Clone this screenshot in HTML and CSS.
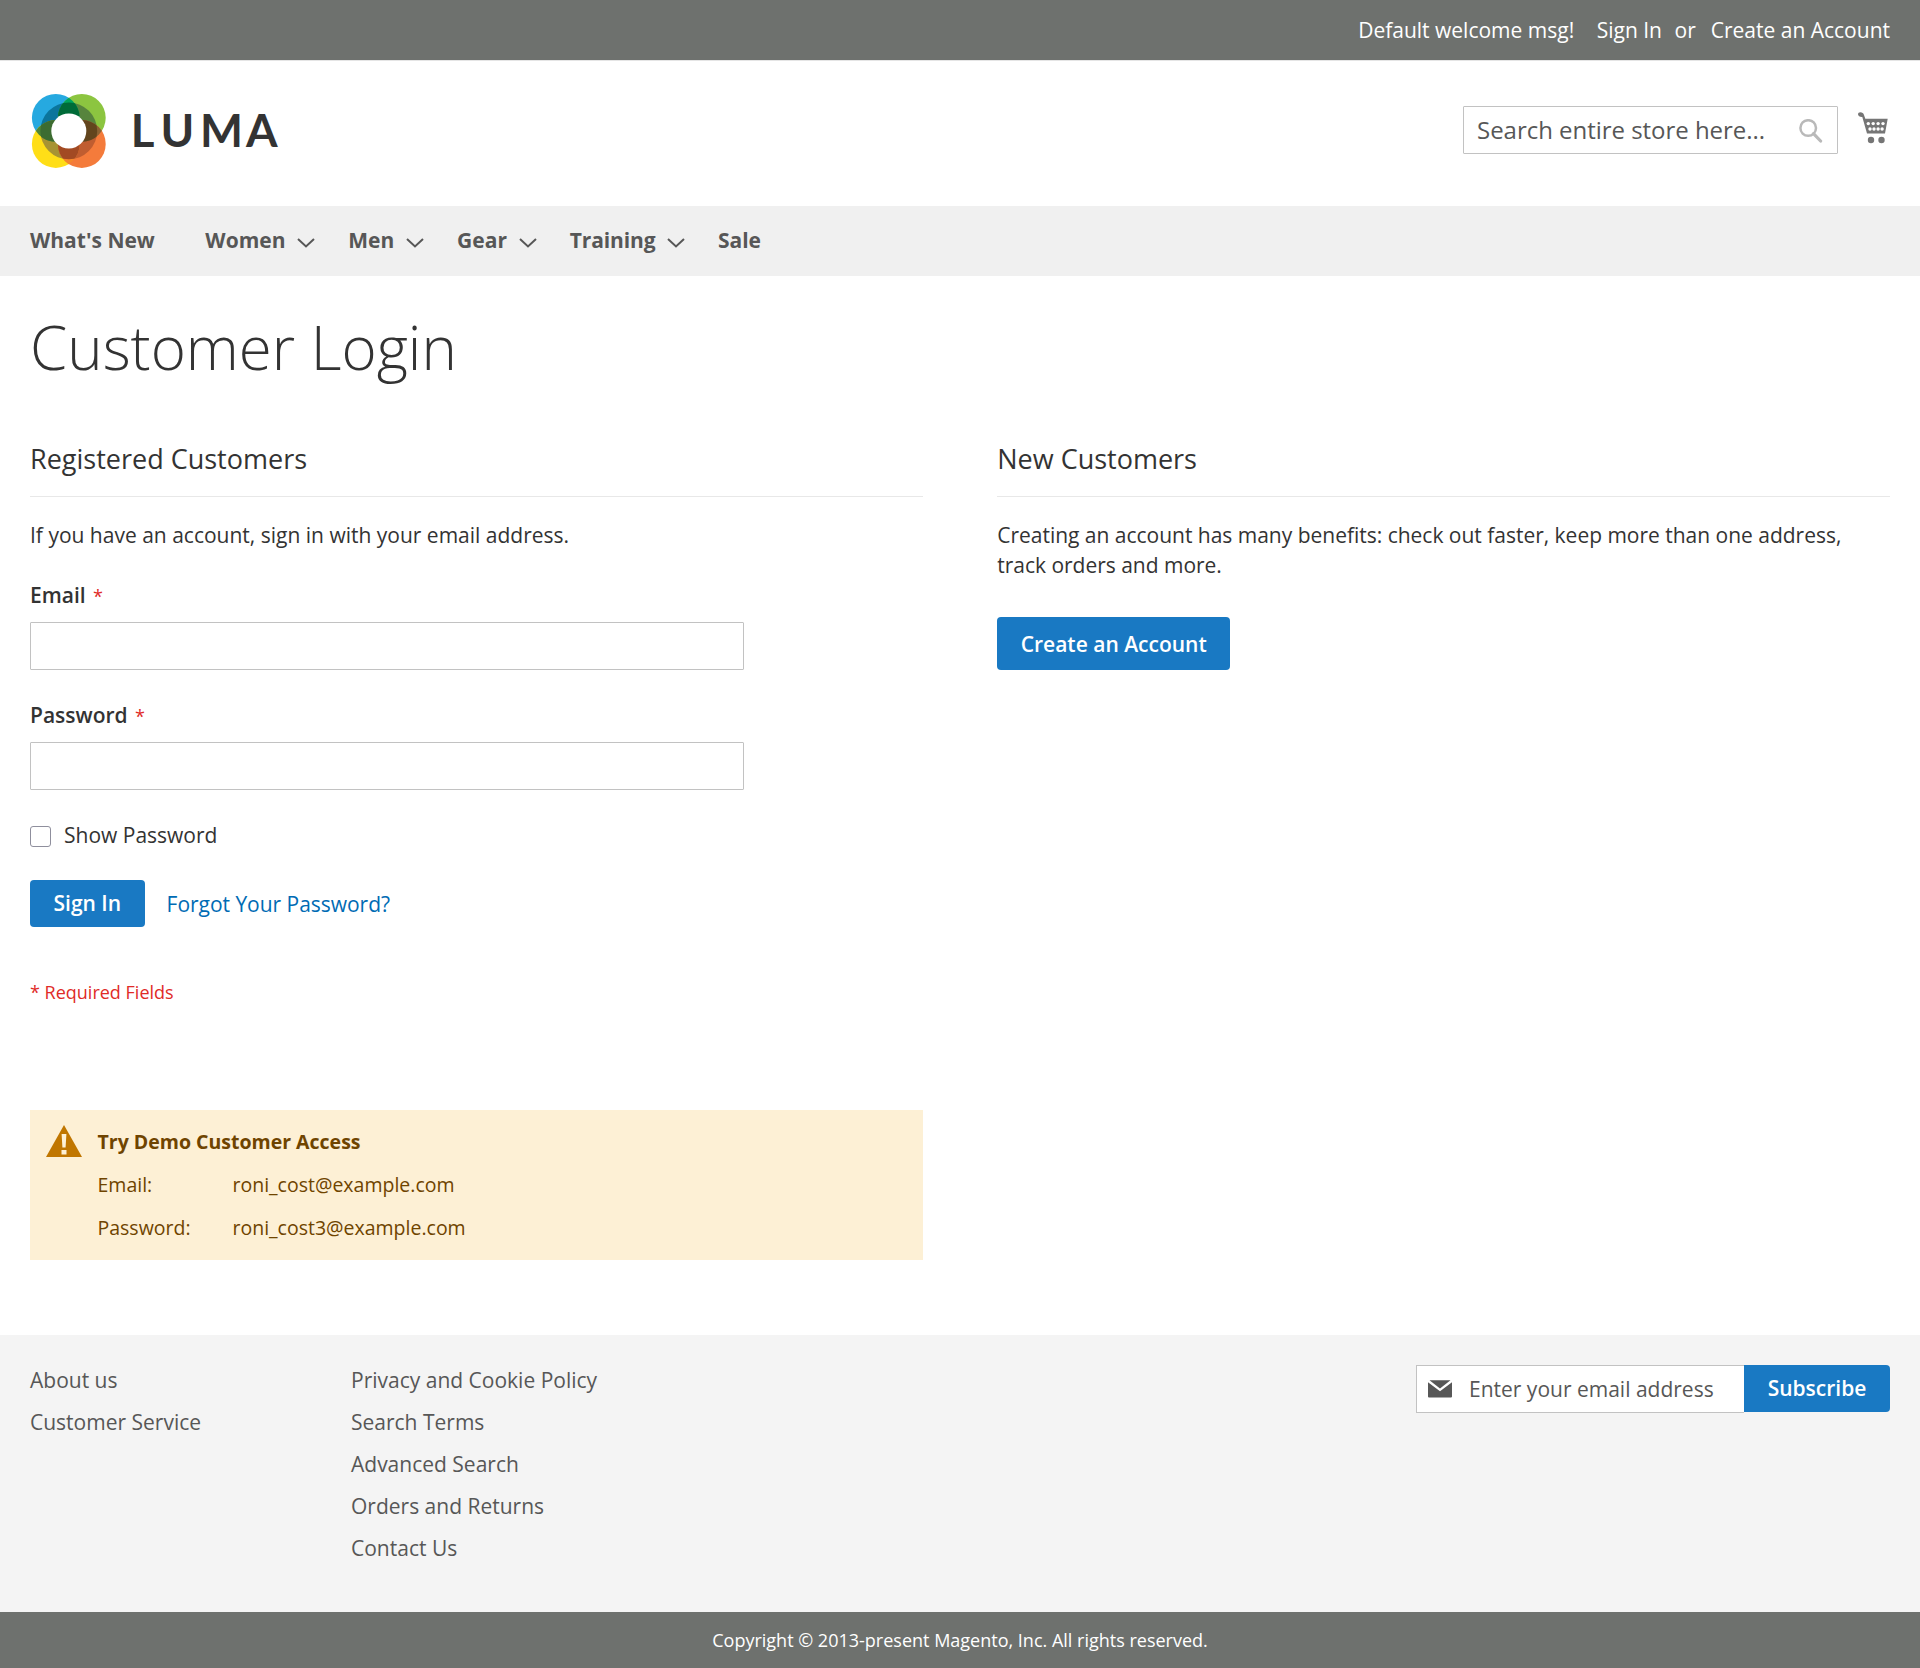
FILE: index.html
```html
<!DOCTYPE html>
<html lang="en">
<head>
<meta charset="utf-8">
<title>Customer Login</title>
<link rel="stylesheet" href="styles.css">
</head>
<body>
<header>
  <div class="topbar">
    <span class="welcome">Default welcome msg!</span>
    <a class="signin" href="#">Sign In</a>
    <span class="or">or</span>
    <a href="#">Create an Account</a>
  </div>
  <div class="header">
    <svg class="logo" width="250" height="78" viewBox="30 92 250 78" role="img" aria-label="Luma">
      <defs>
        <clipPath id="blue"><circle cx="55.8" cy="117.8" r="23.9"/></clipPath>
        <clipPath id="green"><circle cx="81.8" cy="117.8" r="23.9"/></clipPath>
        <clipPath id="yellow"><circle cx="55.8" cy="144" r="23.9"/></clipPath>
        <clipPath id="orange"><circle cx="81.8" cy="144" r="23.9"/></clipPath>
      </defs>
      <circle cx="55.8" cy="117.8" r="23.9" fill="#26a9e0"/>
      <circle cx="81.8" cy="117.8" r="23.9" fill="#8cc540"/>
      <circle cx="55.8" cy="144" r="23.9" fill="#ffde17"/>
      <circle cx="81.8" cy="144" r="23.9" fill="#f47b3b"/>
      <g clip-path="url(#blue)"><circle cx="68.8" cy="130.9" r="28.4" fill="#0b759c"/></g>
      <g clip-path="url(#green)"><circle cx="68.8" cy="130.9" r="28.4" fill="#57843d"/></g>
      <g clip-path="url(#yellow)"><circle cx="68.8" cy="130.9" r="28.4" fill="#a79333"/></g>
      <g clip-path="url(#orange)"><circle cx="68.8" cy="130.9" r="28.4" fill="#c05d30"/></g>
      <g clip-path="url(#blue)">
        <circle cx="81.8" cy="117.8" r="23.9" fill="#00a45c"/>
        <circle cx="55.8" cy="144" r="23.9" fill="#4e8536"/>
        <g clip-path="url(#green)"><circle cx="68.8" cy="130.9" r="28.4" fill="#006b38"/></g>
        <g clip-path="url(#yellow)"><circle cx="68.8" cy="130.9" r="28.4" fill="#3c6c31"/></g>
      </g>
      <g clip-path="url(#orange)">
        <circle cx="81.8" cy="117.8" r="23.9" fill="#8b6334"/>
        <circle cx="55.8" cy="144" r="23.9" fill="#f4872b"/>
        <g clip-path="url(#green)"><circle cx="68.8" cy="130.9" r="28.4" fill="#62451d"/></g>
        <g clip-path="url(#yellow)"><circle cx="68.8" cy="130.9" r="28.4" fill="#a24a23"/></g>
      </g>
      <circle cx="68.8" cy="131" r="17.5" fill="#fff"/>
      <text class="wordmark" x="130.8 160.5 200 246" y="146.6">LUMA</text>
    </svg>
    <div class="header-tools">
      <label class="search">
        <input type="text" placeholder="Search entire store here...">
        <svg width="24" height="24" viewBox="0 0 24 24"><circle cx="9.2" cy="9" r="7.8" fill="none" stroke="#b9b9b9" stroke-width="2.5"/><path d="M14.5 14.7L21.6 22" stroke="#b9b9b9" stroke-width="3.2" stroke-linecap="round"/></svg>
      </label>
      <svg class="cart" width="30" height="32" viewBox="0 0 30 32" fill="#757575">
        <path d="M2.300.3C4.200.3 5.600 1.400 6 3L7.300 6.800H29.700L27 21.500H9L4.300 5C2 5.200 0 3.900 0 2.300 0 1.100 1 .3 2.300.3Z"/>
        <circle cx="13" cy="28" r="3.200"/><circle cx="23.500" cy="28" r="3.200"/>
        <g fill="#fff"><circle cx="10.300" cy="11.600" r="1.700"/><circle cx="15.200" cy="11.600" r="1.700"/><circle cx="20.100" cy="11.600" r="1.700"/><circle cx="25" cy="11.600" r="1.700"/><circle cx="12" cy="17" r="1.700"/><circle cx="16" cy="17" r="1.700"/><circle cx="20.100" cy="17" r="1.700"/><circle cx="24.100" cy="17" r="1.700"/></g>
      </svg>
    </div>
  </div>
  <nav>
    <a class="plain" href="#">What's New</a>
    <a href="#">Women<svg width="18" height="10" viewBox="0 0 18 10"><path d="M1 1L9 8.500 17 1"/></svg></a>
    <a href="#">Men<svg width="18" height="10" viewBox="0 0 18 10"><path d="M1 1L9 8.500 17 1"/></svg></a>
    <a href="#">Gear<svg width="18" height="10" viewBox="0 0 18 10"><path d="M1 1L9 8.500 17 1"/></svg></a>
    <a class="training" href="#">Training<svg width="18" height="10" viewBox="0 0 18 10"><path d="M1 1L9 8.500 17 1"/></svg></a>
    <a href="#">Sale</a>
  </nav>
</header>
<main>
  <h1>Customer Login</h1>
  <div class="columns">
    <section>
      <h2>Registered Customers</h2>
      <p>If you have an account, sign in with your email address.</p>
      <form>
        <label class="field"><span>Email <i>*</i></span><input type="text"></label>
        <label class="field"><span>Password <i>*</i></span><input type="password"></label>
        <label class="show"><input type="checkbox">Show Password</label>
        <div class="actions"><button type="button">Sign In</button><a href="#">Forgot Your Password?</a></div>
        <div class="required">* Required Fields</div>
      </form>
      <div class="message">
        <svg width="36" height="32" viewBox="0 0 36 32"><path d="M18 0L36 32H0Z" fill="#c07600"/><path d="M15.600 9H20.400L19.600 22.500H16.400ZM15.500 25H20.500V29.500H15.500Z" fill="#fdf0d5"/></svg>
        <dl>
          <dt class="wide">Try Demo Customer Access</dt>
          <dt>Email:</dt><dd>roni_cost@example.com</dd>
          <dt>Password:</dt><dd>roni_cost3@example.com</dd>
        </dl>
      </div>
    </section>
    <section>
      <h2>New Customers</h2>
      <p class="benefits">Creating an account has many benefits: check out faster, keep more than one address, track orders and more.</p>
      <button class="create" type="button">Create an Account</button>
    </section>
  </div>
</main>
<footer>
  <div class="footer">
    <ul class="first"><li>About us</li><li>Customer Service</li></ul>
    <ul><li>Privacy and Cookie Policy</li><li>Search Terms</li><li>Advanced Search</li><li>Orders and Returns</li><li>Contact Us</li></ul>
    <div class="newsletter">
      <label>
        <svg width="24" height="18" viewBox="0 0 24 18"><path d="M1.500.3H22.500L12 8.500ZM0 2.200L12 11.300 24 2.200V16.500Q24 17.600 23 17.600H1Q0 17.600 0 16.500Z" fill="#575757"/></svg>
        <input type="text" placeholder="Enter your email address">
      </label>
      <button type="button">Subscribe</button>
    </div>
  </div>
  <div class="copyright">Copyright © 2013-present Magento, Inc. All rights reserved.</div>
</footer>
</body>
</html>
```
FILE: styles.css
```css
* { box-sizing: border-box; }
body { margin: 0; font: 21px/30px "Open Sans", sans-serif; color: #333; background: #fff; }
a { color: inherit; text-decoration: none; }
input, button { font: inherit; color: inherit; }
h1, h2, p, ul, dl, dd { margin: 0; padding: 0; }

.topbar { height: 61px; padding-right: 30px; background: #6e716e; border-bottom: 1px solid #e5e5e5; color: #fff; display: flex; justify-content: flex-end; align-items: center; }
.welcome { margin-right: 22.5px; }
.signin { margin-right: 12.5px; }
.or { margin-right: 15px; }
.header { height: 145px; padding: 31px 30px 0; display: flex; justify-content: space-between; }
.wordmark { font: 700 45.5px Lato, sans-serif; fill: #333; }
.header-tools { display: flex; align-items: flex-start; padding-right: 2px; }
.search { display: flex; align-items: center; width: 375px; height: 48px; margin: 14px 20px 0 0; padding: 0 14px 0 13px; border: 1px solid #c2c2c2; border-radius: 1px; }
.search input { flex: 1; min-width: 0; padding: 0; border: 0; outline: 0; font-size: 24px; letter-spacing: -0.03px; }
.search svg { margin-top: 2px; }
input::placeholder { color: #575757; opacity: 1; }
.cart { margin-top: 20px; }
nav { height: 70px; padding: 0 30px 2px; background: #f0f0f0; display: flex; align-items: center; font-weight: 700; color: #575757; }
nav a { display: flex; align-items: center; margin-right: 32.8px; }
nav a.plain { margin-right: 50.5px; }
nav a.training { margin-right: 32.5px; letter-spacing: -0.12px; }
nav svg { margin: 6px 0 0 12px; fill: none; stroke: #575757; stroke-width: 2; }

main { height: 1059px; padding: 29px 30px 0; }
h1 { font-size: 60px; line-height: 84px; font-weight: 300; }
.columns { display: flex; justify-content: space-between; padding-top: 52px; }
section { width: 48%; }
h2 { height: 56px; margin-bottom: 23px; border-bottom: 1px solid #e8e8e8; font-size: 27px; line-height: 36px; font-weight: 400; }
.benefits { letter-spacing: -0.015px; }
.field { display: block; margin-top: 30px; }
.field span { display: block; height: 42px; font-weight: 600; }
.field i { margin-left: 2px; color: #e02b27; font: 400 18px "Open Sans", sans-serif; }
.field input { display: block; width: 80%; height: 48px; border: 1px solid #c2c2c2; border-radius: 1px; }
.show { display: flex; align-items: center; margin-top: 30px; }
.show input { appearance: none; width: 21px; height: 21px; margin: 3px 13px 0 0; border: 1px solid #8f8f9d; border-radius: 3px; background: #fff; }
.actions { display: flex; align-items: center; margin-top: 30px; }
.actions a { margin: 0 0 0 22px; color: #006bb4; letter-spacing: -0.03px; }
button { height: 47px; padding: 0 23.5px 2px; border: 0; border-radius: 4px; background: #1979c3; color: #fff; font-weight: 600; }
.required { margin-top: 52px; color: #e02b27; font-size: 18px; line-height: 26px; }
.message { display: flex; height: 150px; margin-top: 105px; padding: 15px 16px 15px 15.5px; background: #fdf0d5; color: #6f4400; font-size: 19.5px; }
.message dl { display: grid; grid-template-columns: 135px 1fr; grid-auto-rows: 43px; margin: 2px 0 0 16px; line-height: 30px; }
.wide { grid-column: 1 / 3; font-weight: 700; }
.create { height: 53px; margin-top: 37px; padding-bottom: 0; }

.footer { display: flex; height: 277px; padding: 30px; background: #f4f4f4; color: #575757; }
ul { list-style: none; }
li { height: 42px; }
.first { width: 321px; }
.newsletter { display: flex; margin-left: auto; }
.newsletter label { display: flex; align-items: center; width: 328px; height: 48px; padding-left: 11px; border: 1px solid #c2c2c2; border-right: 0; background: #fff; }
.newsletter input { width: 270px; margin-left: 17px; padding: 0; border: 0; background: none; }
.newsletter button { width: 146px; border-radius: 0 4px 4px 0; }
.copyright { height: 56px; background: #6e716e; color: #fff; font-size: 18px; line-height: 56px; text-align: center; }
```
